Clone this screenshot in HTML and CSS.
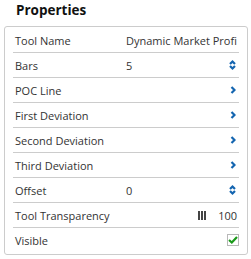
FILE: index.html
```html
<!DOCTYPE html>
<html lang="en">
<head>
  <meta charset="UTF-8">
  <title>Properties</title>
  <link rel="stylesheet" href="styles.css">
</head>
<body>
  <h1 class="title">Properties</h1>

  <div class="panel">
    <div class="row">
      <span class="label">Tool Name</span>
      <span class="value">Dynamic Market Profi</span>
    </div>
    <div class="row">
      <span class="label">Bars</span>
      <span class="value">5</span>
      <svg class="icon" width="7" height="12" viewBox="0 0 7 12"><path d="M1 5 L3.5 2.5 L6 5 M1 7 L3.5 9.5 L6 7" /></svg>
    </div>
    <div class="row">
      <span class="label">POC Line</span>
      <span class="value"></span>
      <svg class="icon" width="6" height="8" viewBox="0 0 6 8"><path d="M1.5 1 L4.5 4 L1.5 7" /></svg>
    </div>
    <div class="row">
      <span class="label">First Deviation</span>
      <span class="value"></span>
      <svg class="icon" width="6" height="8" viewBox="0 0 6 8"><path d="M1.5 1 L4.5 4 L1.5 7" /></svg>
    </div>
    <div class="row">
      <span class="label">Second Deviation</span>
      <span class="value"></span>
      <svg class="icon" width="6" height="8" viewBox="0 0 6 8"><path d="M1.5 1 L4.5 4 L1.5 7" /></svg>
    </div>
    <div class="row">
      <span class="label">Third Deviation</span>
      <span class="value"></span>
      <svg class="icon" width="6" height="8" viewBox="0 0 6 8"><path d="M1.5 1 L4.5 4 L1.5 7" /></svg>
    </div>
    <div class="row">
      <span class="label">Offset</span>
      <span class="value">0</span>
      <svg class="icon" width="7" height="12" viewBox="0 0 7 12"><path d="M1 5 L3.5 2.5 L6 5 M1 7 L3.5 9.5 L6 7" /></svg>
    </div>
    <div class="row">
      <span class="label">Tool Transparency</span>
      <span class="value right">
        <svg class="bars" width="8" height="9" viewBox="0 0 8 9"><rect x="0" y="0" width="2" height="9"/><rect x="3" y="0" width="2" height="9"/><rect x="6" y="0" width="2" height="9"/></svg>
        <span>100</span>
      </span>
    </div>
    <div class="row">
      <span class="label">Visible</span>
      <span class="value"></span>
      <span class="check">
        <svg width="10" height="8" viewBox="0 0 10 8"><path d="M1 4 L3.8 6.5 L9 1" /></svg>
      </span>
    </div>
  </div>
</body>
</html>
```

FILE: styles.css
```css
body {
  margin: 0;
  font-family: 'Open Sans', sans-serif;
  color: #333;
  background-color: #fff;
}
.title {
  margin: 0;
  padding: 0 0 0 16px;
  height: 26px;
  font-size: 13.5px;
  font-weight: 700;
  line-height: 20px;
  color: #111;
}
.panel {
  margin-left: 4px;
  width: 244px;
  box-sizing: border-box;
  border: 1px solid #ccc;
  border-radius: 3px;
  padding: 1px 8px 2px 8px;
}
.row {
  display: flex;
  align-items: center;
  height: 24px;
  padding: 0 2px;
  border-bottom: 1px solid #ccc;
  font-size: 11px;
}
.row:last-child {
  border-bottom: none;
}
.label {
  width: 111px;
  flex: none;
}
.value {
  flex: 1;
  white-space: nowrap;
}
.value.right {
  display: flex;
  align-items: center;
  justify-content: flex-end;
  gap: 12px;
}
.icon {
  flex: none;
  margin-right: 1px;
}
.icon path {
  fill: none;
  stroke: #1465b0;
  stroke-width: 2.2;
}
.bars rect {
  fill: #444;
}
.check {
  flex: none;
  width: 12px;
  height: 12px;
  box-sizing: border-box;
  border: 1px solid #b8b8b8;
  display: flex;
  align-items: center;
  justify-content: center;
  margin-right: -2px;
}
.check path {
  fill: none;
  stroke: #1a9a1a;
  stroke-width: 2.2;
}
```
